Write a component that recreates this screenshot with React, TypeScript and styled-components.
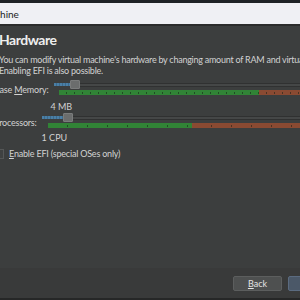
import React from 'react';
import styled, { createGlobalStyle } from 'styled-components';

const GlobalStyle = createGlobalStyle`
  html, body { margin: 0; padding: 0; background: #3c3e3e; }
  * { box-sizing: border-box; }
`;

const Window = styled.div`
  width: 300px;
  height: 300px;
  overflow: hidden;
  display: flex;
  flex-direction: column;
  background: #3c3e3e;
  font-family: Lato, 'Open Sans', sans-serif;
  color: #d2d2d2;
`;

const TaskStrip = styled.div`
  height: 3px;
  background: #1e2226;
  flex-shrink: 0;
`;

const TitleBar = styled.div`
  height: 21px;
  flex-shrink: 0;
  display: flex;
  align-items: center;
  background: #eff0f4;
  border-bottom: 2px solid #2b2c2c;
  color: #1c1c1c;
  font-size: 10px;
  white-space: nowrap;
  box-sizing: content-box;
`;

const TitleText = styled.span`
  margin-left: -82px;
`;

const Page = styled.div`
  flex: 1;
  display: flex;
  flex-direction: column;
  margin-left: -6px;
  padding-top: 6px;
  white-space: nowrap;
`;

const Heading = styled.h1`
  margin: 0 0 0 5px;
  font-size: 14px;
  line-height: 16px;
  font-weight: 700;
  color: #eeeeee;
  letter-spacing: -0.5px;
`;

const Description = styled.p`
  margin: 6px 0 0 5px;
  font-size: 9px;
  line-height: 11px;
  letter-spacing: -0.25px;
`;

const Row = styled.div<{ $top: number; $gap: number }>`
  display: flex;
  align-items: flex-start;
  flex-shrink: 0;
  margin-top: ${(p) => p.$top}px;
  gap: ${(p) => p.$gap}px;
`;

const Label = styled.span`
  font-size: 9px;
  line-height: 11px;
  padding-top: 4px;
  letter-spacing: -0.2px;
`;

const Key = styled.span`
  text-decoration: underline;
`;

const SliderCol = styled.div`
  flex: 1;
  display: flex;
  flex-direction: column;
`;

const Track = styled.div`
  height: 9px;
  display: flex;
  align-items: center;
`;

const Fill = styled.div<{ $w: number }>`
  width: ${(p) => p.$w}px;
  height: 3px;
  background: repeating-linear-gradient(90deg, #4a7fa6 0 2px, #3d6a8c 2px 3px);
`;

const Handle = styled.div`
  width: 10px;
  height: 9px;
  background: #6b6d6d;
  border: 1px solid #7a7c7c;
  border-radius: 1px;
`;

const Groove = styled.div`
  flex: 1;
  height: 4px;
  background: #454747;
  border-top: 1px solid #303131;
  border-bottom: 1px solid #303131;
`;

const Scale = styled.div<{ $inset: number }>`
  display: flex;
  height: 5px;
  margin: 1px 0 0 ${(p) => p.$inset}px;
`;

const Band = styled.div<{ $w?: number; $color: string; $tick: number }>`
  ${(p) => (p.$w ? `width: ${p.$w}px;` : 'flex: 1;')}
  height: 5px;
  background-color: ${(p) => p.$color};
  background-image: repeating-linear-gradient(
    90deg,
    transparent 0 ${(p) => p.$tick - 1}px,
    rgba(20, 30, 20, 0.55) ${(p) => p.$tick - 1}px ${(p) => p.$tick}px
  );
  background-size: 100% 2px;
  background-repeat: no-repeat;
  background-position: 0 2px;
`;

const MinLabel = styled.div<{ $left: number; $top: number }>`
  font-size: 9px;
  line-height: 11px;
  margin: ${(p) => p.$top}px 0 0 ${(p) => p.$left}px;
`;

const CheckRow = styled.label`
  display: flex;
  align-items: center;
  flex-shrink: 0;
  gap: 5px;
  margin-top: 5px;
  font-size: 9px;
  line-height: 11px;
  letter-spacing: -0.2px;
`;

const Box = styled.span`
  width: 10px;
  height: 10px;
  background: #3f4141;
  border: 1px solid #555757;
`;

const Spacer = styled.div`
  flex: 1;
`;

const Footer = styled.div`
  height: 30px;
  flex-shrink: 0;
  display: flex;
  align-items: center;
  gap: 6px;
  padding-left: 233px;
  background: #393a3a;
  border-bottom: 2px solid #262727;
  box-sizing: content-box;
  white-space: nowrap;
`;

const Button = styled.div<{ $primary?: boolean }>`
  width: 49px;
  height: 15px;
  flex-shrink: 0;
  display: flex;
  align-items: center;
  justify-content: center;
  font-size: 9px;
  color: #e4e4e4;
  background: ${(p) => (p.$primary ? '#4b5868' : '#4e5050')};
  border: 1px solid ${(p) => (p.$primary ? '#5b6b80' : '#5c5e5e')};
  border-radius: 2px;
`;

type SliderProps = {
  fill: number;
  green: number;
  inset: number;
  tick: number;
};

const Slider = ({ fill, green, inset, tick }: SliderProps) => (
  <>
    <Track>
      <Fill $w={fill} />
      <Handle />
      <Groove />
    </Track>
    <Scale $inset={inset}>
      <Band $w={green} $color="#318336" $tick={tick} />
      <Band $color="#8a4a32" $tick={tick} />
    </Scale>
  </>
);

export default function App() {
  return (
    <>
      <GlobalStyle />
      <Window>
        <TaskStrip />
        <TitleBar>
          <TitleText>Create Virtual Machine</TitleText>
        </TitleBar>
        <Page>
          <Heading>Hardware</Heading>
          <Description>
            You can modify virtual machine's hardware by changing amount of RAM and virtual CPU count.
            <br />
            Enabling EFI is also possible.
          </Description>
          <Row $top={4} $gap={6}>
            <Label>
              Base <Key>M</Key>emory:
            </Label>
            <SliderCol>
              <Slider fill={16} green={200} inset={5} tick={8} />
              <MinLabel $left={-4} $top={6}>4 MB</MinLabel>
            </SliderCol>
          </Row>
          <Row $top={1} $gap={5}>
            <Label>
              <Key>P</Key>rocessors:
            </Label>
            <SliderCol>
              <Slider fill={21} green={144} inset={6} tick={20} />
              <MinLabel $left={0} $top={4}>1 CPU</MinLabel>
            </SliderCol>
          </Row>
          <CheckRow>
            <Box />
            <span>
              <Key>E</Key>nable EFI (special OSes only)
            </span>
          </CheckRow>
          <Spacer />
        </Page>
        <Footer>
          <Button>
            <Key>B</Key>ack
          </Button>
          <Button $primary>
            <Key>N</Key>ext
          </Button>
          <Button>Finish</Button>
        </Footer>
      </Window>
    </>
  );
}
